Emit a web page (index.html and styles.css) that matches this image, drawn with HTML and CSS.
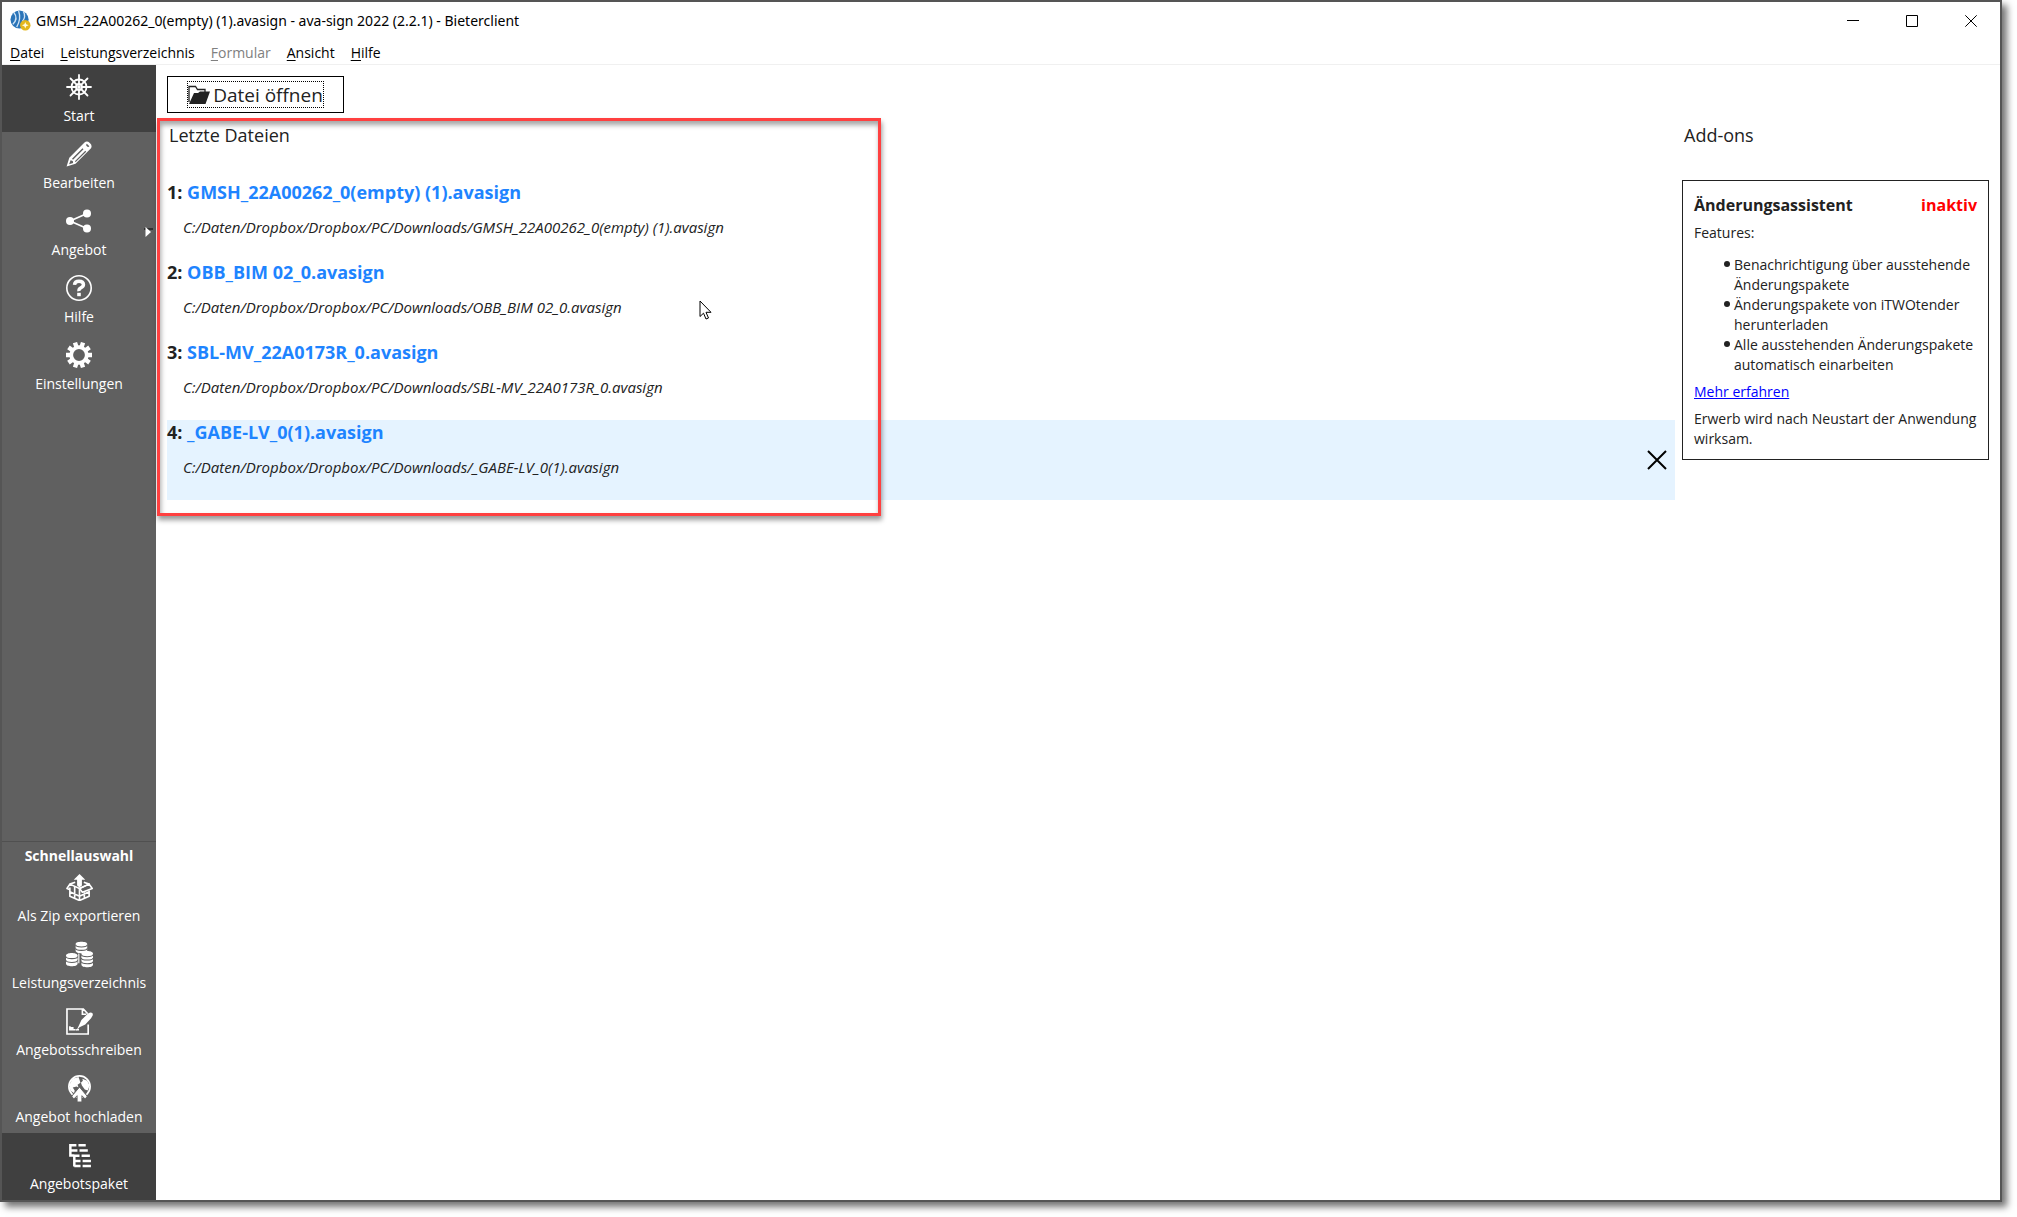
FILE: index.html
```html
<!DOCTYPE html>
<html lang="de">
<head>
<meta charset="utf-8">
<meta name="viewport" content="width=device-width, initial-scale=1">
<title>ava-sign 2022 - Bieterclient</title>
<link rel="stylesheet" href="styles.css">
</head>
<body>
<div class="window">
  <header class="titlebar">
    <svg class="app-icon" viewBox="0 0 22 22" aria-hidden="true">
      <circle cx="10" cy="10" r="9.5" fill="#2a74b8"/>
      <path d="M4 2.5Q9 9 3 15M9 1Q12 9 7 18M14 1.500Q17 7 13 12" fill="none" stroke="#cfe3f5" stroke-width="1.400"/>
      <circle cx="16" cy="16" r="5.500" fill="#e3b71c"/>
      <path d="M16 12.500l1 2.500 2.500 1-2.500 1-1 2.500-1-2.500-2.500-1 2.500-1z" fill="#fffbe0"/>
    </svg>
    <h1 class="title">GMSH_22A00262_0(empty) (1).avasign - ava-sign 2022 (2.2.1) - Bieterclient</h1>
    <div class="controls">
      <button class="control" aria-label="Minimieren"><svg viewBox="0 0 12 12"><path d="M0 5.500h12"/></svg></button>
      <button class="control" aria-label="Maximieren"><svg viewBox="0 0 12 12"><path d="M.5.5h11v11H.5z"/></svg></button>
      <button class="control" aria-label="Schließen"><svg viewBox="0 0 12 12"><path d="M.3.3l11.400 11.400M11.700.3L.3 11.700"/></svg></button>
    </div>
  </header>
  <nav class="menubar">
    <button class="menu"><u>D</u>atei</button>
    <button class="menu"><u>L</u>eistungsverzeichnis</button>
    <button class="menu" disabled><u>F</u>ormular</button>
    <button class="menu"><u>A</u>nsicht</button>
    <button class="menu"><u>H</u>ilfe</button>
  </nav>
  <div class="body">
    <nav class="sidebar">
      <button class="side active">
        <svg class="icon" viewBox="0 0 26 26" fill="none" stroke="#fff" stroke-width="1.800" stroke-linecap="round"><circle cx="13" cy="13" r="7.500"/><circle cx="13" cy="13" r="3"/><circle cx="13" cy="13" r="1" fill="#fff"/><path d="M13 1v9M13 16v9M1 13h9M16 13h9M4.500 4.500l6.400 6.400M15.100 15.100l6.400 6.400M21.500 4.500l-6.400 6.400M10.900 15.100l-6.400 6.400"/></svg>
        <span>Start</span>
      </button>
      <button class="side">
        <svg class="icon" viewBox="0 0 26 26"><path fill="#fff" fill-rule="evenodd" d="M18.500 1.500Q21 -.5 23.800 2T25 7.200L9.500 22.800.6 25.400 3.300 16.800zM16.500 7.200L6 17.700l1 1L17.500 8.200zM19.300 9.800L8.900 20.200l.8.900L20.200 10.700zM4.600 19.300l-1.500 3.900 4-1.200-.3-1.900zM20.800 2.800a1.500 1.500 0 1 0 2.600 2.400z"/></svg>
        <span>Bearbeiten</span>
      </button>
      <button class="side">
        <svg class="icon" viewBox="0 0 26 26" fill="#fff"><path d="M4 13L21 5.500M4 13l17 7.500" stroke="#fff" stroke-width="1.800"/><circle cx="4" cy="13" r="4"/><circle cx="21" cy="5.500" r="4"/><circle cx="21" cy="20.500" r="4"/></svg>
        <span>Angebot</span>
        <svg class="expand" viewBox="0 0 9 10" aria-hidden="true"><path d="M0 2h9" stroke="#000"/><path d="M1.500 0L7 5l-5.500 5z" fill="#fff"/></svg>
      </button>
      <button class="side">
        <svg class="icon" viewBox="0 0 26 26" fill="none" stroke="#fff"><circle cx="13" cy="13" r="12.200" stroke-width="1.600"/><path d="M8.500 9.800Q8.700 6.200 13 6.200T17.500 9.600Q17.500 11.500 15 12.800T13 16.200" stroke-width="3.400"/><path d="M11.200 17.800h3.600v3.400h-3.600z" fill="#fff" stroke="none"/></svg>
        <span>Hilfe</span>
      </button>
      <button class="side">
        <svg class="icon" viewBox="0 0 26 26" fill="none" stroke="#fff"><circle cx="13" cy="13" r="7.800" stroke-width="3.800"/><g stroke-width="4.400"><path d="M13 0v4.500M13 21.500V26" transform="rotate(18 13 13)"/><path d="M13 0v4.500M13 21.500V26" transform="rotate(54 13 13)"/><path d="M13 0v4.500M13 21.500V26" transform="rotate(90 13 13)"/><path d="M13 0v4.500M13 21.500V26" transform="rotate(126 13 13)"/><path d="M13 0v4.500M13 21.500V26" transform="rotate(162 13 13)"/></g></svg>
        <span>Einstellungen</span>
      </button>
      <section class="quick">
        <h2 class="quick-title">Schnellauswahl</h2>
        <button class="side">
          <svg class="icon large" viewBox="0 0 28 28" fill="none" stroke="#fff" stroke-width="1.700" stroke-linejoin="round"><path d="M11.500 12V6H8l6-6 6 6h-3.500v6L14 14z" fill="#fff" stroke="none"/><path d="M9.500 8.500L4 10.500 14 15 24 10.500 18.500 8.500M4 10.500L1 15l2.500 1"/><path d="M14 15l10-4.500 3.200 4.500L17 19z"/><path d="M4 14v9l10 4.500L24 23v-6M14 15v12.500M9 13v12M4 18.500l10 4.500 10-4.500M19 19v6"/></svg>
          <span>Als Zip exportieren</span>
        </button>
        <button class="side">
          <svg class="icon large" viewBox="0 0 28 28"><g fill="#fff"><path d="M10 3v7c0 3.500 12 3.500 12 0V3C22 0 10 0 10 3z"/><path d="M0 15v8.500c0 3.500 12 3.500 12 0V15c0-3.500-12-3.500-12 0zM16 13v11.500c0 3.500 12 3.500 12 0V13c0-3.500-12-3.500-12 0z"/><path d="M13.300 13v10" stroke="#fff" stroke-width="1.200"/></g><path d="M10 4c0 3 12 3 12 0M10 7.500c0 3 12 3 12 0M0 16c0 3 12 3 12 0M0 20c0 3 12 3 12 0M16 14c0 3 12 3 12 0M16 17.500c0 3 12 3 12 0M16 21.300c0 3 12 3 12 0" fill="none" stroke="#606060" stroke-width="1.100"/></svg>
          <span>Leistungsverzeichnis</span>
        </button>
        <button class="side">
          <svg class="icon large" viewBox="0 0 28 28" fill="none" stroke="#fff" stroke-width="1.700"><path d="M22.500 6L18 1H1v26h22V17M17 1v5.500h4"/><path d="M27.500 5.500c1 2-.5 3.500-1.500 5l-6 6.500-6 3-3.500 4 3-6L16 12.500l5.500-5.500c1.500-1.500 4-3.500 6-1.500z" fill="#fff" stroke="none"/><path d="M4 19v3.500h1.500v-2h1.500v2h3M10.500 22.500h3"/></svg>
          <span>Angebotsschreiben</span>
        </button>
        <button class="side">
          <svg class="icon large" viewBox="0 0 28 28" fill="none"><circle cx="14" cy="12" r="11" stroke="#fff" stroke-width="1.800"/><path d="M13 2L7 4 3.500 10l1 6 4 3 .5-3-2-3 4-1 2 1-1-3 3-2-1-3zM17 4l5 2 2.500 5-2 5-3-1-3-4-1-3 2-2z" fill="#fff"/><path d="M14 12.500l8 9.500-2 3-3.500-3.500V28h-5v-6.500L8 25l-2-3z" fill="#fff" stroke="#606060"/></svg>
          <span>Angebot hochladen</span>
        </button>
        <button class="side active">
          <svg class="icon large" viewBox="0 0 26 26" fill="none" stroke="#fff" stroke-width="2.400"><path d="M4.200 2v11H8M4 3.200h6M12 3.200h7M4 8.200h7M13 8.200h8M8 13v10.500M8 13.200h5M15 13.200h8M8 18.200h6M16 18.200h8M8 23h6M16 23h8"/></svg>
          <span>Angebotspaket</span>
        </button>
      </section>
    </nav>
    <main class="content">
      <button class="open">
        <span class="open-focus">
          <svg class="folder" viewBox="0 0 22 20" aria-hidden="true"><path d="M1 17V1.500h6.500l2 3H17V8" fill="none" stroke="#222" stroke-width="1.300"/><path d="M1 19L6 8h4l2-1.500h10L17.500 19z" fill="#222"/></svg>
          <span>Datei öffnen</span>
        </span>
      </button>
      <div class="columns">
        <section class="recent">
          <h2 class="heading">Letzte Dateien</h2>
          <ol class="files">
            <li class="file"><div class="file-text"><h3 class="name">1: <a href="#">GMSH_22A00262_0(empty) (1).avasign</a></h3><p class="path">C:/Daten/Dropbox/Dropbox/PC/Downloads/GMSH_22A00262_0(empty) (1).avasign</p></div></li>
            <li class="file"><div class="file-text"><h3 class="name">2: <a href="#">OBB_BIM 02_0.avasign</a></h3><p class="path">C:/Daten/Dropbox/Dropbox/PC/Downloads/OBB_BIM 02_0.avasign</p></div></li>
            <li class="file"><div class="file-text"><h3 class="name">3: <a href="#">SBL-MV_22A0173R_0.avasign</a></h3><p class="path">C:/Daten/Dropbox/Dropbox/PC/Downloads/SBL-MV_22A0173R_0.avasign</p></div></li>
            <li class="file hovered"><div class="file-text"><h3 class="name">4: <a href="#">_GABE-LV_0(1).avasign</a></h3><p class="path">C:/Daten/Dropbox/Dropbox/PC/Downloads/_GABE-LV_0(1).avasign</p></div>
              <button class="remove" aria-label="Eintrag entfernen"><svg viewBox="0 0 20 20"><path d="M1 1l18 18M19 1L1 19"/></svg></button></li>
          </ol>
        </section>
        <aside class="addons">
          <h2 class="heading">Add-ons</h2>
          <article class="card">
            <header class="card-head"><h3 class="card-title">Änderungsassistent</h3><strong class="status">inaktiv</strong></header>
            <p class="features">Features:</p>
            <ul class="bullets">
              <li>Benachrichtigung über ausstehende Änderungspakete</li>
              <li>Änderungspakete von iTWOtender herunterladen</li>
              <li>Alle ausstehenden Änderungspakete automatisch einarbeiten</li>
            </ul>
            <a class="more" href="#">Mehr erfahren</a>
            <p class="note">Erwerb wird nach Neustart der Anwendung wirksam.</p>
          </article>
        </aside>
      </div>
      <div class="marker" aria-hidden="true"></div>
      <svg class="cursor" viewBox="0 0 13 20" aria-hidden="true"><path d="M1 1v15.500l3.500-3.300 2.500 5.800 2.500-1-2.500-5.700h5z" fill="#fff" stroke="#000"/></svg>
    </main>
  </div>
</div>
</body>
</html>
```
FILE: styles.css
```css
* {
  box-sizing: border-box;
}

body {
  display: flex;
  min-height: 100vh;
  margin: 0;
  padding: 0 15px 15px 0;
  background: #fff;
  color: #222;
  font: 14px/20px "Open Sans", "Noto Sans", sans-serif;
}

h1, h2, h3, p, ol, ul {
  margin: 0;
  padding: 0;
  font-size: inherit;
  font-weight: normal;
}

button {
  padding: 0;
  border: 0;
  background: none;
  color: inherit;
  font: inherit;
}

.window {
  display: flex;
  flex: 1;
  flex-direction: column;
  border: 2px solid #555;
  background: #fff;
  box-shadow: 5px 5px 7px rgba(0, 0, 0, 0.55);
}

.titlebar {
  display: flex;
  align-items: center;
  height: 37px;
  padding-left: 8px;
  color: #000;
}

.app-icon {
  width: 21px;
  height: 21px;
  margin-right: 5px;
}

.title {
  flex: 1;
  font-family: "Noto Sans", "Open Sans", sans-serif;
}

.controls {
  display: flex;
}

.control {
  display: grid;
  place-items: center;
  width: 59px;
  height: 36px;
}

.control svg {
  width: 12px;
  height: 12px;
  fill: none;
  stroke: #000;
}

.menubar {
  display: flex;
  gap: 16px;
  height: 26px;
  padding: 2px 8px 0;
  border-bottom: 1px solid #f0f0f0;
  color: #000;
}

.menu {
  height: 24px;
}

.menu u {
  text-underline-offset: 2px;
}

.menu:disabled {
  color: #808080;
}

.body {
  display: flex;
  flex: 1;
}

.sidebar {
  display: flex;
  flex: none;
  flex-direction: column;
  width: 154px;
  background: #606060;
  color: #fff;
}

.side {
  position: relative;
  display: flex;
  flex-direction: column;
  align-items: center;
  justify-content: space-between;
  width: 100%;
  height: 67px;
  padding: 9px 0 6px;
  white-space: nowrap;
}

.side.active {
  background: #404040;
}

.icon {
  width: 26px;
  height: 26px;
}

.icon.large {
  width: 27px;
  height: 27px;
}

.expand {
  position: absolute;
  top: 28px;
  right: 3px;
  width: 9px;
  height: 10px;
}

.quick {
  margin-top: auto;
  border-top: 1px solid #505050;
}

.quick-title {
  height: 23px;
  padding-top: 4px;
  font-weight: bold;
  text-align: center;
}

.content {
  position: relative;
  flex: 1;
  padding: 11px 11px 0;
}

.open {
  display: grid;
  place-items: center;
  width: 177px;
  height: 37px;
  border: 1px solid #000;
  font-size: 19px;
}

.open-focus {
  display: flex;
  align-items: center;
  gap: 3px;
  height: 27px;
  border: 1px dotted #000;
}

.folder {
  width: 22px;
  height: 20px;
}

.columns {
  display: flex;
  gap: 7px;
}

.recent {
  flex: 1;
}

.addons {
  width: 307px;
}

.heading {
  height: 67px;
  padding: 10px 2px 0;
  font-size: 18px;
  line-height: 24px;
}

.files {
  list-style: none;
}

.file {
  display: flex;
  height: 80px;
}

.file-text {
  flex: 1;
}

.hovered {
  background: #e5f3ff;
}

.name {
  font-size: 18px;
  font-weight: bold;
  line-height: 24px;
}

.name a {
  color: #1e84ff;
  text-decoration: none;
}

.path {
  padding: 13px 16px 0;
  font-size: 15px;
  font-style: italic;
}

.remove {
  width: 36px;
  padding-top: 5px;
}

.remove svg {
  width: 20px;
  height: 20px;
  fill: none;
  stroke: #000;
  stroke-width: 2;
}

.card {
  padding: 12px 11px 10px;
  border: 1px solid #222;
}

.card-head {
  display: flex;
  justify-content: space-between;
  line-height: 24px;
}

.card-title,
.status {
  font-size: 16px;
  font-weight: bold;
}

.status {
  color: #f00;
}

.features {
  padding: 6px 0 12px;
}

.bullets {
  padding-left: 30px;
  list-style: none;
}

.bullets li {
  display: flex;
  gap: 4px;
}

.bullets li::before {
  content: "";
  flex: none;
  width: 6px;
  height: 6px;
  margin-top: 6px;
  border-radius: 50%;
  background: #222;
}

.more {
  display: block;
  margin: 7px 0;
  color: #00f;
}

.marker {
  position: absolute;
  top: 53px;
  left: 1px;
  width: 724px;
  height: 398px;
  border: 3px solid #ff4040;
  box-shadow: 1px 4px 5px rgba(0, 0, 0, 0.4), inset 1px 4px 5px rgba(0, 0, 0, 0.35);
}

.cursor {
  position: absolute;
  top: 235px;
  left: 543px;
  width: 13px;
  height: 20px;
}
```
